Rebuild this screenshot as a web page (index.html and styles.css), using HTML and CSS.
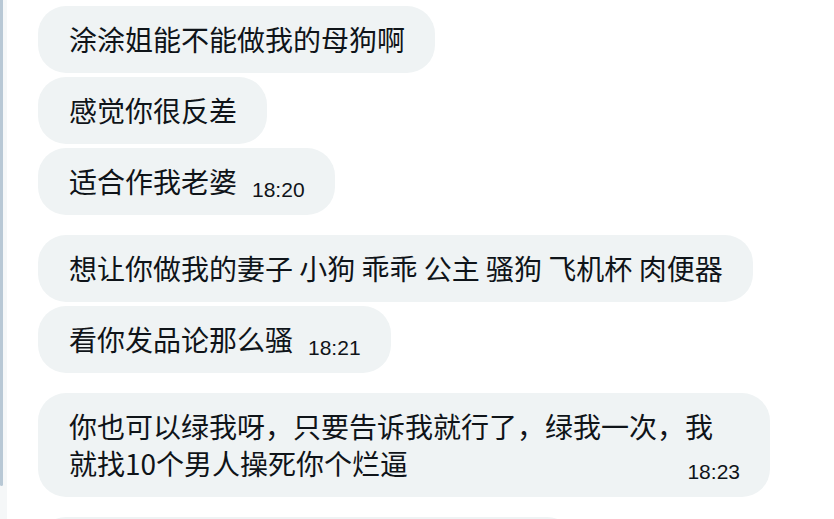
FILE: index.html
```html
<!DOCTYPE html>
<html lang="zh-CN">
  <head>
    <meta charset="UTF-8" />
    <meta name="viewport" content="width=device-width, initial-scale=1.0" />
    <title>Chat</title>
    <link rel="stylesheet" href="styles.css">
  </head>
  <body>
    <div class="page">
      <!-- left edge rail -->
      <div class="rail">
        <div class="rail-thumb"></div>
      </div>

      <div class="chat">
        <div class="group">
          <div class="bubble">涂涂姐能不能做我的母狗啊</div>
          <div class="bubble">感觉你很反差</div>
          <div class="bubble">适合作我老婆<span class="time">18:20</span></div>
        </div>

        <div class="group">
          <div class="bubble">想让你做我的妻子 小狗 乖乖 公主 骚狗 飞机杯 肉便器</div>
          <div class="bubble">看你发品论那么骚<span class="time">18:21</span></div>
        </div>

        <div class="group">
          <div class="bubble">你也可以绿我呀，只要告诉我就行了，绿我一次，我就找10个男人操死你个烂逼<span class="time">18:23</span></div>
        </div>

        <div class="group">
          <div class="bubble bubble-cut"></div>
        </div>
      </div>
    </div>
  </body>
</html>
```

FILE: styles.css
```css
html,
body {
  margin: 0;
  height: 100%;
  overflow: hidden;
  background: #ffffff;
}
body {
  font-family: "Noto Sans CJK SC", "Liberation Sans", sans-serif;
  color: #0f1419;
}
.page {
  display: flex;
  height: 100%;
}
.rail {
  width: 7px;
  flex-shrink: 0;
  background: #f5f7f8;
}
.rail-thumb {
  width: 3px;
  height: 486px;
  background: #b8c8d5;
  border-radius: 0 0 2px 2px;
}
.chat {
  flex: 1;
  padding: 6px 0 0 31px;
  display: flex;
  flex-direction: column;
  gap: 20px;
}
.group {
  display: flex;
  flex-direction: column;
  align-items: flex-start;
  gap: 4px;
}
.bubble {
  box-sizing: border-box;
  max-width: 732px;
  padding: 15px 30px 15px 31px;
  background: #eff3f4;
  border-radius: 28px;
  font-size: 28px;
  line-height: 37px;
}
.bubble-cut {
  width: 537px;
  height: 67px;
}
.time {
  float: right;
  margin: 17px 0 0 15px;
  font-family: "Liberation Sans", Arial, sans-serif;
  font-size: 21px;
  line-height: 20px;
  color: #0f1419;
}
```
